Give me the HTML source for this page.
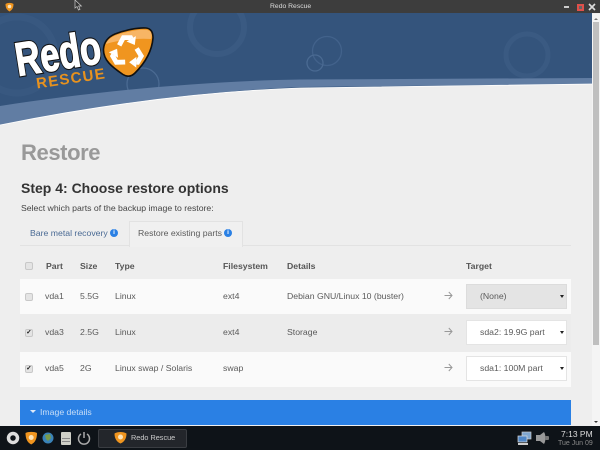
<!DOCTYPE html>
<html><head><meta charset="utf-8">
<style>
html,body{margin:0;padding:0;width:600px;height:450px;overflow:hidden;background:#eee;font-family:"Liberation Sans",sans-serif;}
#w{position:absolute;left:0;top:0;width:600px;height:450px;overflow:hidden;filter:blur(0.35px);}
.a{position:absolute;white-space:nowrap;}
.t{font-size:8.7px;color:#5a5a5a;line-height:12px;}
.h{font-size:8.7px;color:#555;font-weight:bold;line-height:12px;}
.cb{position:absolute;left:25px;width:6px;height:6px;background:#e4e4e4;border:1px solid #c8c8c8;border-radius:2px;}
.ck{font-size:7px;line-height:6px;color:#222;text-align:center;font-weight:bold;overflow:hidden;}
.sel{position:absolute;left:466px;width:99px;height:23px;background:#fff;border:1px solid #e4e4e4;font-size:8.7px;color:#5a5a5a;line-height:23px;text-indent:13px;}
.sel i{position:absolute;top:10px;width:0;height:0;border:2px solid transparent;border-top:3px solid #222;right:2px;}
.row{position:absolute;left:20px;width:551px;}
.arr{position:absolute;left:444px;}
.info{position:absolute;width:8px;height:8px;border-radius:50%;background:#2a80e4;color:#fff;font-size:6.5px;line-height:8px;text-align:center;font-weight:bold;top:229px;}
</style></head><body><div id="w">
<svg class="a" style="left:0;top:13px" width="592" height="125" viewBox="0 13 592 125">
<rect x="0" y="13" width="592" height="125" fill="#34547c"/>
<g fill="none" stroke="#3a5a82">
<circle cx="217" cy="27" r="27" stroke-width="6"/>
<circle cx="17" cy="55" r="38" stroke-width="7" stroke="#385880"/>
<circle cx="527" cy="55" r="21" stroke-width="5"/>
<circle cx="327" cy="51" r="14.500" stroke-width="1.300" stroke="#42628b"/>
<circle cx="315" cy="63" r="8" stroke-width="1.300" stroke="#4a6a92"/>
<circle cx="143" cy="84" r="16" stroke-width="1.300" stroke="#4a6a92"/>
</g>
<path d="M0 106 C90 92 200 81 300 79.500 L592 78 L592 84 L300 87 C190 92 90 107 0 125 Z" fill="#617da3"/>
<path d="M0 125 C90 107 190 92 300 88 L592 84 L592 138 L0 138 Z" fill="#eee"/>
<path d="M0 125 C90 107 190 92 300 88 L592 84" fill="none" stroke="#fff" stroke-width="0.800"/>
<path d="M103.500 49 C104 42 108 37 115 34 C125 30 138 27.500 146 28 C151 28.500 153 32 153 38 C152 50 146 62 135 73 C131 77 127 77 123 74.500 C112 67 103 60 103.500 49 Z" fill="#f0951f" stroke="#111" stroke-width="1.600"/>
<path d="M106 44 C108 38 115 35 125 32.500 C135 30 146 28.500 150 31 C152 33 152 36 151 39 C138 38 118 40 106 44 Z" fill="#f7b565"/>
<g transform="translate(127 52) scale(1.200)">
<g><path d="M-6.500 -5.500 L-3 -12 H3 L3.500 -11" fill="none" stroke="#fff" stroke-width="4"/><path d="M7.400 -13.200 L-0.400 -8.800 L6.500 -5.800Z" fill="#fff"/></g>
<g transform="rotate(120)"><path d="M-6.500 -5.500 L-3 -12 H3 L3.500 -11" fill="none" stroke="#fff" stroke-width="4"/><path d="M7.400 -13.200 L-0.400 -8.800 L6.500 -5.800Z" fill="#fff"/></g>
<g transform="rotate(240)"><path d="M-6.500 -5.500 L-3 -12 H3 L3.500 -11" fill="none" stroke="#fff" stroke-width="4"/><path d="M7.400 -13.200 L-0.400 -8.800 L6.500 -5.800Z" fill="#fff"/></g>
</g>
<text x="18" y="76" font-family="Liberation Sans,sans-serif" font-weight="bold" font-size="47" fill="#111" stroke="#111" stroke-width="3.500" textLength="86" lengthAdjust="spacingAndGlyphs" transform="rotate(-9 18 76)">Redo</text>
<text x="18" y="76" font-family="Liberation Sans,sans-serif" font-weight="bold" font-size="47" fill="#fff" stroke="#fff" stroke-width="1.300" textLength="86" lengthAdjust="spacingAndGlyphs" transform="rotate(-9 18 76)">Redo</text>
<text x="37" y="88.500" font-family="Liberation Sans,sans-serif" font-weight="bold" font-size="15" fill="#e8921e" textLength="69" transform="rotate(-8.500 37 88.500)">RESCUE</text>
</svg>

<div class="a" style="left:0;top:0;width:600px;height:13px;background:#3d3d3d;"></div>
<svg class="a" style="left:5px;top:2px" width="9" height="10" viewBox="0 0 9 10"><path d="M0.500 2 C3 0.500 6 0.500 8.500 2 C8.500 6 7 8 4.500 9.500 C2 8 0.500 6 0.500 2Z" fill="#f0951f"/><circle cx="4.500" cy="4.500" r="1.800" fill="#fde3b8"/></svg>
<div class="a" style="left:270px;top:0;font-size:6.800px;line-height:14px;color:#ddd;">Redo Rescue</div>
<svg class="a" style="left:74px;top:0" width="9" height="11" viewBox="0 0 9 11"><path d="M1 0 L1 8 L3 6.500 L4.500 10 L6 9.300 L4.600 6 L7.400 6 Z" fill="#333" stroke="#ccc" stroke-width="0.700"/></svg>
<div class="a" style="left:564px;top:6px;width:5px;height:2px;background:#ccc;"></div>
<div class="a" style="left:577px;top:4px;width:3px;height:3px;border:2px solid #e0504a;background:#666;"></div>
<svg class="a" style="left:588px;top:3px" width="8" height="8" viewBox="0 0 8 8"><path d="M1 1L7 7M7 1L1 7" stroke="#ddd" stroke-width="1.600"/></svg>

<div class="a" style="left:592px;top:14px;width:8px;height:412px;background:#f4f4f4;"></div>
<div class="a" style="left:593px;top:22px;width:6px;height:323px;background:#bfbfbf;"></div>
<div class="a" style="left:594px;top:16px;width:0;height:0;border:2px solid transparent;border-bottom:2px solid #777;"></div>
<div class="a" style="left:594px;top:421px;width:0;height:0;border:2px solid transparent;border-top:2px solid #333;"></div>

<div class="a" style="left:21px;top:138px;font-size:22px;line-height:30px;font-weight:bold;color:#999;letter-spacing:-0.4px;">Restore</div>
<div class="a" style="left:21px;top:179px;font-size:14px;line-height:18px;font-weight:bold;color:#333;">Step 4: Choose restore options</div>
<div class="a t" style="left:21px;top:202px;color:#444;">Select which parts of the backup image to restore:</div>

<div class="a" style="left:20px;top:245px;width:551px;height:1px;background:#e2e2e2;"></div>
<div class="a" style="left:129px;top:221px;width:112px;height:25px;background:#f0f0f0;border:1px solid #e2e2e2;border-bottom:none;"></div>
<div class="a t" style="left:30px;top:227px;color:#4a6a94;">Bare metal recovery</div><div class="info" style="left:110px;">i</div>
<div class="a t" style="left:138px;top:227px;">Restore existing parts</div><div class="info" style="left:224px;">i</div>

<div class="cb" style="top:262px;"></div>
<div class="a h" style="left:46px;top:260px;">Part</div>
<div class="a h" style="left:80px;top:260px;">Size</div>
<div class="a h" style="left:115px;top:260px;">Type</div>
<div class="a h" style="left:223px;top:260px;">Filesystem</div>
<div class="a h" style="left:287px;top:260px;">Details</div>
<div class="a h" style="left:466px;top:260px;">Target</div>

<div class="row" style="top:279px;height:35px;background:#fafafa;"></div>
<div class="row" style="top:314px;height:38px;background:#ececec;"></div>
<div class="row" style="top:352px;height:35px;background:#fafafa;"></div>

<div class="cb" style="top:293px;"></div>
<div class="a t" style="left:45px;top:290px;">vda1</div>
<div class="a t" style="left:80px;top:290px;">5.5G</div>
<div class="a t" style="left:115px;top:290px;">Linux</div>
<div class="a t" style="left:223px;top:290px;">ext4</div>
<div class="a t" style="left:287px;top:290px;">Debian GNU/Linux 10 (buster)</div>

<div class="cb ck" style="top:329px;">✓</div>
<div class="a t" style="left:45px;top:326px;">vda3</div>
<div class="a t" style="left:80px;top:326px;">2.5G</div>
<div class="a t" style="left:115px;top:326px;">Linux</div>
<div class="a t" style="left:223px;top:326px;">ext4</div>
<div class="a t" style="left:287px;top:326px;">Storage</div>

<div class="cb ck" style="top:365px;">✓</div>
<div class="a t" style="left:45px;top:362px;">vda5</div>
<div class="a t" style="left:80px;top:362px;">2G</div>
<div class="a t" style="left:115px;top:362px;">Linux swap / Solaris</div>
<div class="a t" style="left:223px;top:362px;">swap</div>

<svg class="arr" style="top:291px" width="9" height="9" viewBox="0 0 9 9"><path d="M0.500 4.500H8M4.800 1L8 4.500L4.800 8" fill="none" stroke="#999" stroke-width="1"/></svg>
<svg class="arr" style="top:327px" width="9" height="9" viewBox="0 0 9 9"><path d="M0.500 4.500H8M4.800 1L8 4.500L4.800 8" fill="none" stroke="#999" stroke-width="1"/></svg>
<svg class="arr" style="top:363px" width="9" height="9" viewBox="0 0 9 9"><path d="M0.500 4.500H8M4.800 1L8 4.500L4.800 8" fill="none" stroke="#999" stroke-width="1"/></svg>

<div class="sel" style="top:284px;background:#e4e4e4;border-color:#dcdcdc;">(None)<i></i></div>
<div class="sel" style="top:320px;">sda2: 19.9G part<i></i></div>
<div class="sel" style="top:356px;">sda1: 100M part<i></i></div>

<div class="a" style="left:20px;top:400px;width:551px;height:25px;background:#2a80e4;"></div>
<div class="a" style="left:30px;top:410px;width:0;height:0;border:3px solid transparent;border-top:3px solid #dfeaf8;"></div>
<div class="a" style="left:40px;top:406px;font-size:8.700px;line-height:12px;color:#c9def7;">Image details</div>

<div class="a" style="left:0;top:426px;width:600px;height:24px;background:#0e1318;"></div>
<svg class="a" style="left:0;top:426px" width="110" height="24" viewBox="0 0 110 24">
<circle cx="13" cy="12" r="4.500" fill="none" stroke="#ddd" stroke-width="3.500"/>
<path d="M25.500 7 C28 5.500 34.500 5.500 37 7 C37 13 35 16.500 31.200 18.500 C27.500 16.500 25.500 13 25.500 7Z" fill="#f0951f"/><circle cx="31.200" cy="11.500" r="2.500" fill="#fde3b8"/>
<circle cx="48" cy="12" r="5.500" fill="#3a83b8"/><path d="M45 9 L50 8 L51 12 L48 15 L46 13Z" fill="#7a9a4a"/>
<rect x="61" y="6" width="10" height="13" rx="1" fill="#cfd0c8"/><rect x="62" y="12" width="8" height="1" fill="#888"/><rect x="62" y="15" width="8" height="1" fill="#888"/>
<path d="M81 8 A5.500 5.500 0 1 0 87 8" fill="none" stroke="#aaa" stroke-width="1.500"/><path d="M84 6 V12" stroke="#aaa" stroke-width="1.500"/>
</svg>
<div class="a" style="left:98px;top:429px;width:87px;height:17px;background:#23262b;border:1px solid #3a3d42;border-radius:2px;"></div>
<svg class="a" style="left:114px;top:431px" width="13" height="13" viewBox="0 0 13 13"><path d="M0.500 2.500 C3.500 0.500 9.500 0.500 12.500 2.500 C12.500 8 10 11 6.500 12.500 C3 11 0.500 8 0.500 2.500Z" fill="#f0951f"/><circle cx="6.500" cy="6" r="2.500" fill="#fde3b8"/></svg>
<div class="a" style="left:131px;top:432px;font-size:7.300px;line-height:12px;color:#ccc;">Redo Rescue</div>

<svg class="a" style="left:516px;top:430px" width="36" height="16" viewBox="0 0 36 16">
<rect x="6" y="2" width="9" height="7" fill="#7fa6cf" stroke="#ccc" stroke-width="0.700"/><rect x="2" y="6" width="9" height="6" fill="#4f86c6" stroke="#ddd" stroke-width="0.700"/><rect x="2" y="13" width="10" height="2" fill="#ccc"/>
<path d="M20 5 H24 L28 2 C30 5 30 11 28 14 L24 11 H20Z" fill="#999"/><rect x="29" y="6" width="4" height="4" rx="1" fill="#777"/>
</svg>
<div class="a" style="left:561px;top:429px;font-size:8.500px;line-height:11px;color:#ddd;">7:13 PM</div>
<div class="a" style="left:558px;top:439px;font-size:7px;line-height:9px;color:#888;">Tue Jun 09</div>
</div></body></html>
